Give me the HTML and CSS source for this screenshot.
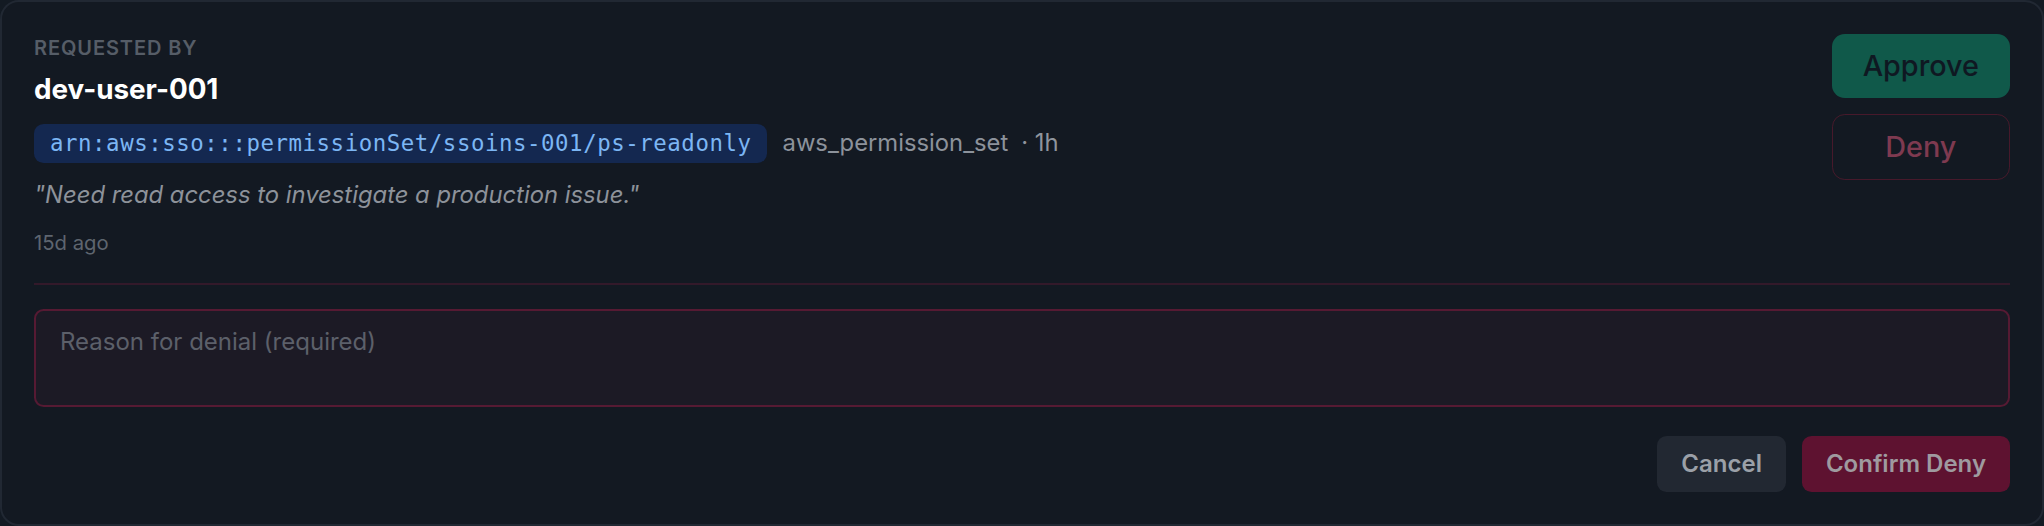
FILE: index.html
```html
<!DOCTYPE html>
<html lang="en">
<head>
<meta charset="utf-8">
<title>Access request</title>
<link rel="stylesheet" href="styles.css">
</head>
<body>
<div class="card">
  <div class="top">
    <div class="info">
      <div class="label">Requested by</div>
      <div class="user">dev-user-001</div>
      <div class="meta">
        <span class="arn">arn:aws:sso:::permissionSet/ssoins-001/ps-readonly</span>
        <span class="type">aws_permission_set</span>
        <span class="dur">· 1h</span>
      </div>
      <div class="quote">"Need read access to investigate a production issue."</div>
      <div class="age">15d ago</div>
    </div>
    <div class="actions">
      <button class="btn-approve">Approve</button>
      <button class="btn-deny">Deny</button>
    </div>
  </div>
  <div class="divider"></div>
  <textarea class="reason" placeholder="Reason for denial (required)"></textarea>
  <div class="footer">
    <button class="btn-cancel">Cancel</button>
    <button class="btn-confirm">Confirm Deny</button>
  </div>
</div>
</body>
</html>
```
FILE: styles.css
```css
* { box-sizing: border-box; }
html, body { margin: 0; padding: 0; background: #131a23; }
body { font-family: Inter, "Noto Sans", sans-serif; }

.card {
  width: 2044px;
  height: 526px;
  background: #131922;
  border: 2px solid #212833;
  border-radius: 19px;
  padding: 32px;
  display: flex;
  flex-direction: column;
}

.top {
  display: flex;
  align-items: flex-start;
  gap: 24px;
}
.info { flex: 1; display: flex; flex-direction: column; }

.label {
  font-size: 20px;
  line-height: 25.6px;
  font-weight: 600;
  text-transform: uppercase;
  letter-spacing: 0.9px;
  color: #565d67;
  margin-top: 2px;
}
.user {
  margin-top: 5px;
  font-size: 27.8px;
  line-height: 44.8px;
  font-weight: 700;
  color: #ffffff;
}
.meta {
  margin-top: 12.8px;
  display: flex;
  align-items: center;
  gap: 16px;
  font-size: 23.8px;
  line-height: 32px;
  color: #8c929b;
}
.arn {
  font-family: "DejaVu Sans Mono", "Liberation Mono", monospace;
  font-size: 22.4px;
  letter-spacing: 0.55px;
  line-height: 32px;
  padding: 3.2px 15px 3.2px 16px;
  background: #142850;
  color: #7cb6f4;
  border-radius: 9.6px;
}
.dur { margin-left: -3px; color: #8f959e; }
.quote {
  margin-top: 16px;
  font-size: 23.8px;
  line-height: 32px;
  font-style: italic;
  color: #8d929a;
}
.age {
  margin-top: 19px;
  font-size: 20.3px;
  line-height: 25.6px;
  color: #5e656f;
}

.actions {
  display: flex;
  flex-direction: column;
  gap: 16px;
}
.actions button {
  font-family: Inter, "Noto Sans", sans-serif;
  font-size: 28.8px;
  line-height: 44.8px;
  font-weight: 500;
  padding: 9.6px 31px;
  border-radius: 12.8px;
  cursor: pointer;
}
.btn-approve {
  background: #10594a;
  color: #0f1822;
  border: none;
}
.btn-deny {
  background: transparent;
  color: #7e3a50;
  border: 1.6px solid #47192b;
}

.divider {
  margin-top: 27.5px;
  height: 2px;
  background: #33192a;
}

.reason {
  margin-top: 24px;
  height: 99px;
  width: 100%;
  resize: none;
  background: #1c1a25;
  border: 2px solid #561a33;
  border-radius: 9.6px;
  padding: 14px 24px;
  font-family: Inter, "Noto Sans", sans-serif;
  font-size: 24px;
  line-height: 33.6px;
  color: #d1d5db;
  outline: none;
}
.reason::placeholder { color: #5c606a; }

.footer {
  margin-top: 29px;
  display: flex;
  justify-content: flex-end;
  gap: 16px;
}
.footer button {
  font-family: Inter, "Noto Sans", sans-serif;
  font-size: 24px;
  line-height: 32px;
  font-weight: 600;
  padding: 12px 24px;
  border: none;
  border-radius: 9.6px;
  cursor: pointer;
}
.btn-cancel { background: #222832; color: #9ba0a8; }
.btn-confirm { background: #5e1230; color: #9f9a9f; }
```
